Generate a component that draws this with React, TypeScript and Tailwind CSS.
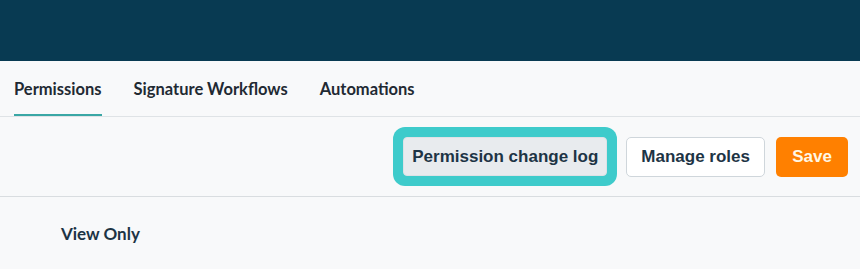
export default function App() {
  const tabs = ['Permissions', 'Signature Workflows', 'Automations'];

  return (
    <div className="h-[269px] w-full overflow-hidden bg-[#f8f9fa]">
      <header className="h-[61px] bg-[#083a52]" />

      <nav className="flex h-[56px] items-stretch gap-[32px] border-b border-[#dfe3e6] px-[14px] font-['Lato',sans-serif]">
        {tabs.map((tab, i) => (
          <div
            key={tab}
            className={`flex items-center border-b-2 pt-[3px] text-[16.5px] font-bold text-[#1f2a33] ${
              i === 0 ? 'border-[#3aa7a5]' : 'border-transparent'
            }`}
          >
            {tab}
          </div>
        ))}
      </nav>

      <div className="flex h-[80px] items-center justify-end border-b border-[#d9dde0] pr-[12px] font-['Liberation_Sans',sans-serif]">
        <div className="mr-[9px] rounded-[12px] bg-[#3ecbcb] p-[10px]">
          <button
            type="button"
            className="h-[39px] rounded-[4px] border border-[#dde2e6] bg-[#e8ebee] px-[8px] text-[17px] font-bold text-[#1d3445]"
          >
            Permission change log
          </button>
        </div>
        <button
          type="button"
          className="mr-[11px] h-[40px] rounded-[5px] border border-[#cfd6db] bg-white px-[14px] text-[17px] font-bold text-[#1d3445]"
        >
          Manage roles
        </button>
        <button
          type="button"
          className="h-[40px] w-[72px] rounded-[5px] bg-[#ff8000] text-[17px] font-bold text-[#fff8e6]"
        >
          Save
        </button>
      </div>

      <div className="px-[61px] pt-[24px] font-['Lato',sans-serif] text-[17px] font-bold text-[#1d3445]">
        View Only
      </div>
    </div>
  );
}
